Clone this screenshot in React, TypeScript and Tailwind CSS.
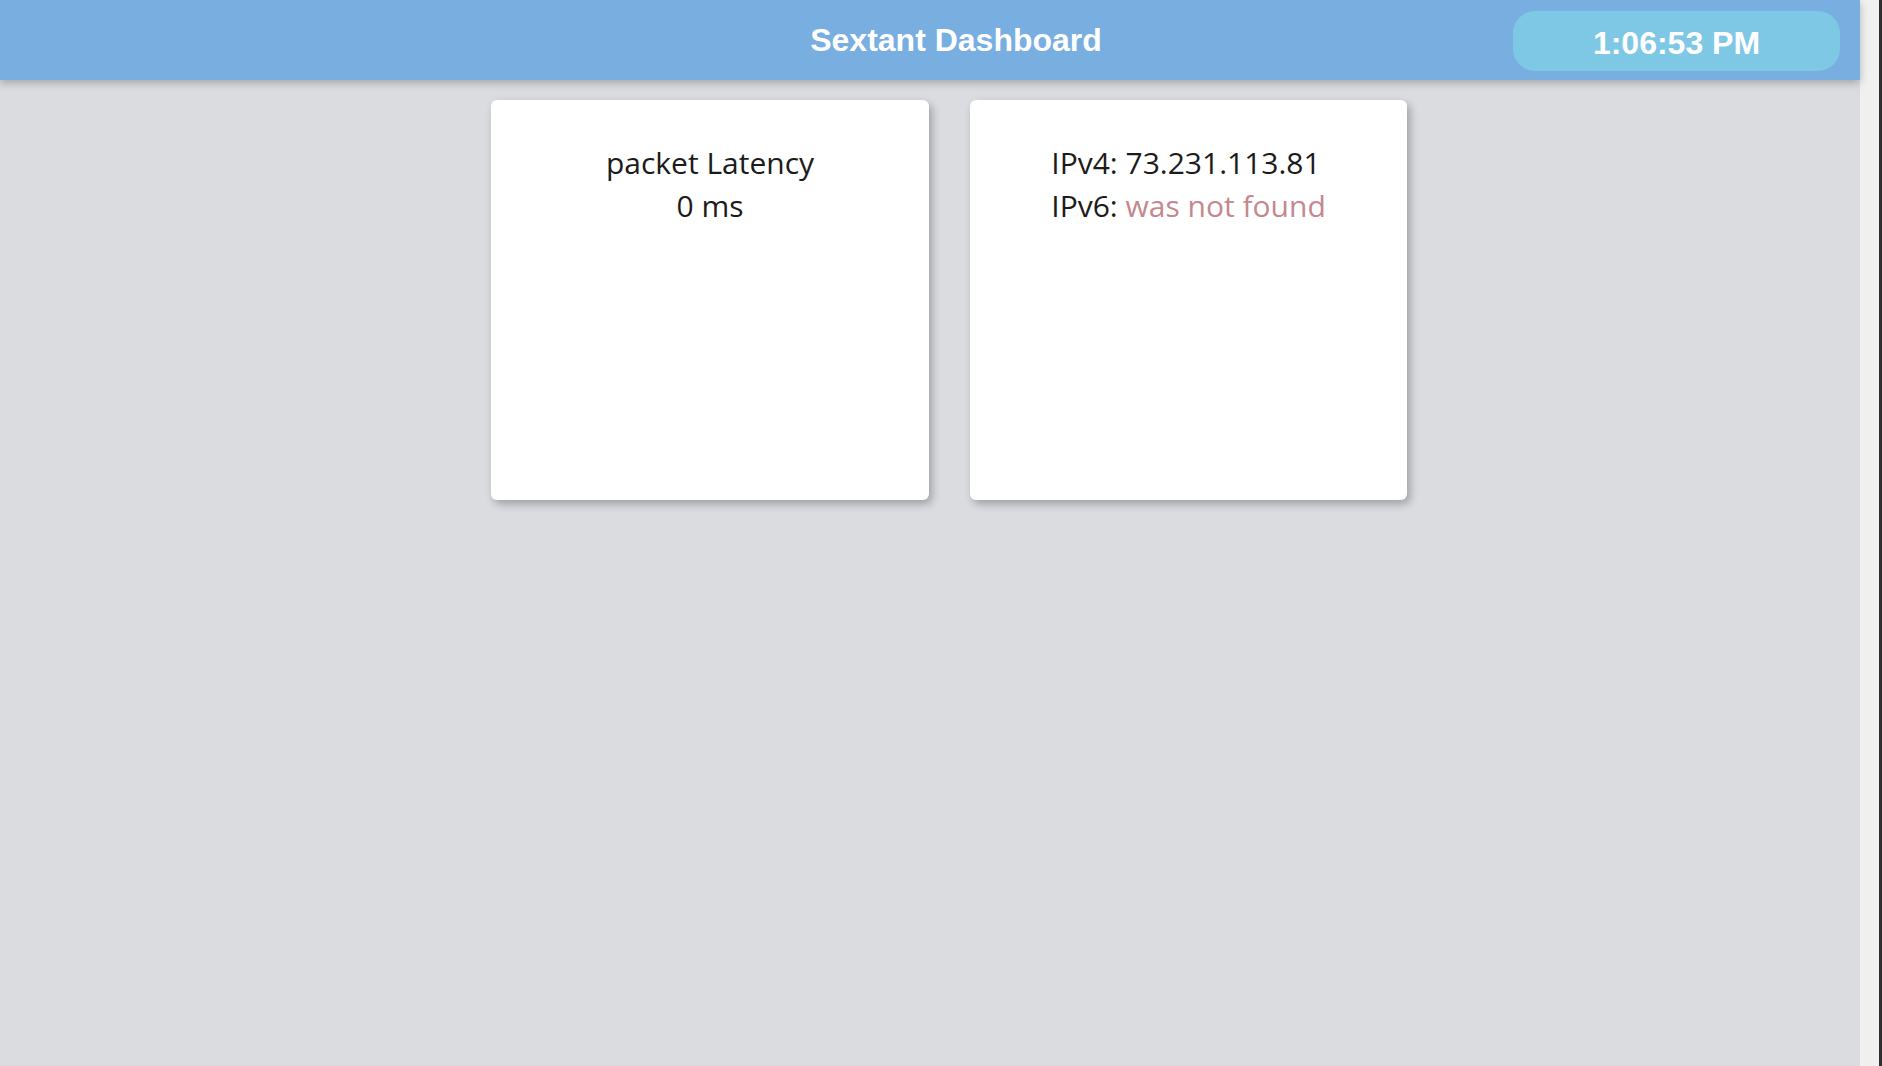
export default function App() {
  return (
    <div className="flex h-[1066px] w-[1882px] overflow-hidden bg-[#dbdce0]">
      <div className="flex w-[1860px] flex-col">
        <header className="relative z-10 flex h-[80px] items-center bg-[#78aee0] pr-[20px] shadow-[0_3px_8px_rgba(0,0,0,0.25)]">
          <h1 className="flex-1 pl-[399px] text-center font-['Liberation_Sans',Arial,sans-serif] text-[32px] font-bold text-white">
            Sextant Dashboard
          </h1>
          <div className="mt-[2px] flex h-[60px] w-[327px] items-center justify-center rounded-[22px] bg-[#7ec8e6] pt-[4px] font-['Liberation_Sans',Arial,sans-serif] text-[32px] font-bold text-white">
            1:06:53 PM
          </div>
        </header>

        <main className="flex gap-[41px] pl-[491px] pt-[20px] font-['Open_Sans','Noto_Sans',sans-serif] text-[30px] leading-[43px] text-[#1b1b1b]">
          <div className="h-[400px] w-[438px] rounded-[6px] bg-white pt-[41px] text-center shadow-[3px_4px_8px_rgba(0,0,0,0.28)]">
            <p>packet Latency</p>
            <p>0 ms</p>
          </div>
          <div className="h-[400px] w-[437px] rounded-[6px] bg-white pt-[41px] text-center shadow-[3px_4px_8px_rgba(0,0,0,0.28)]">
            <div className="inline-block text-left">
              <p>IPv4: 73.231.113.81</p>
              <p>
                IPv6: <span className="text-[#c4888e]">was not found</span>
              </p>
            </div>
          </div>
        </main>
      </div>
      <div className="w-[19px] bg-[#f0f0ee]" />
      <div className="w-[3px] bg-[#2e2e2e]" />
    </div>
  )
}
